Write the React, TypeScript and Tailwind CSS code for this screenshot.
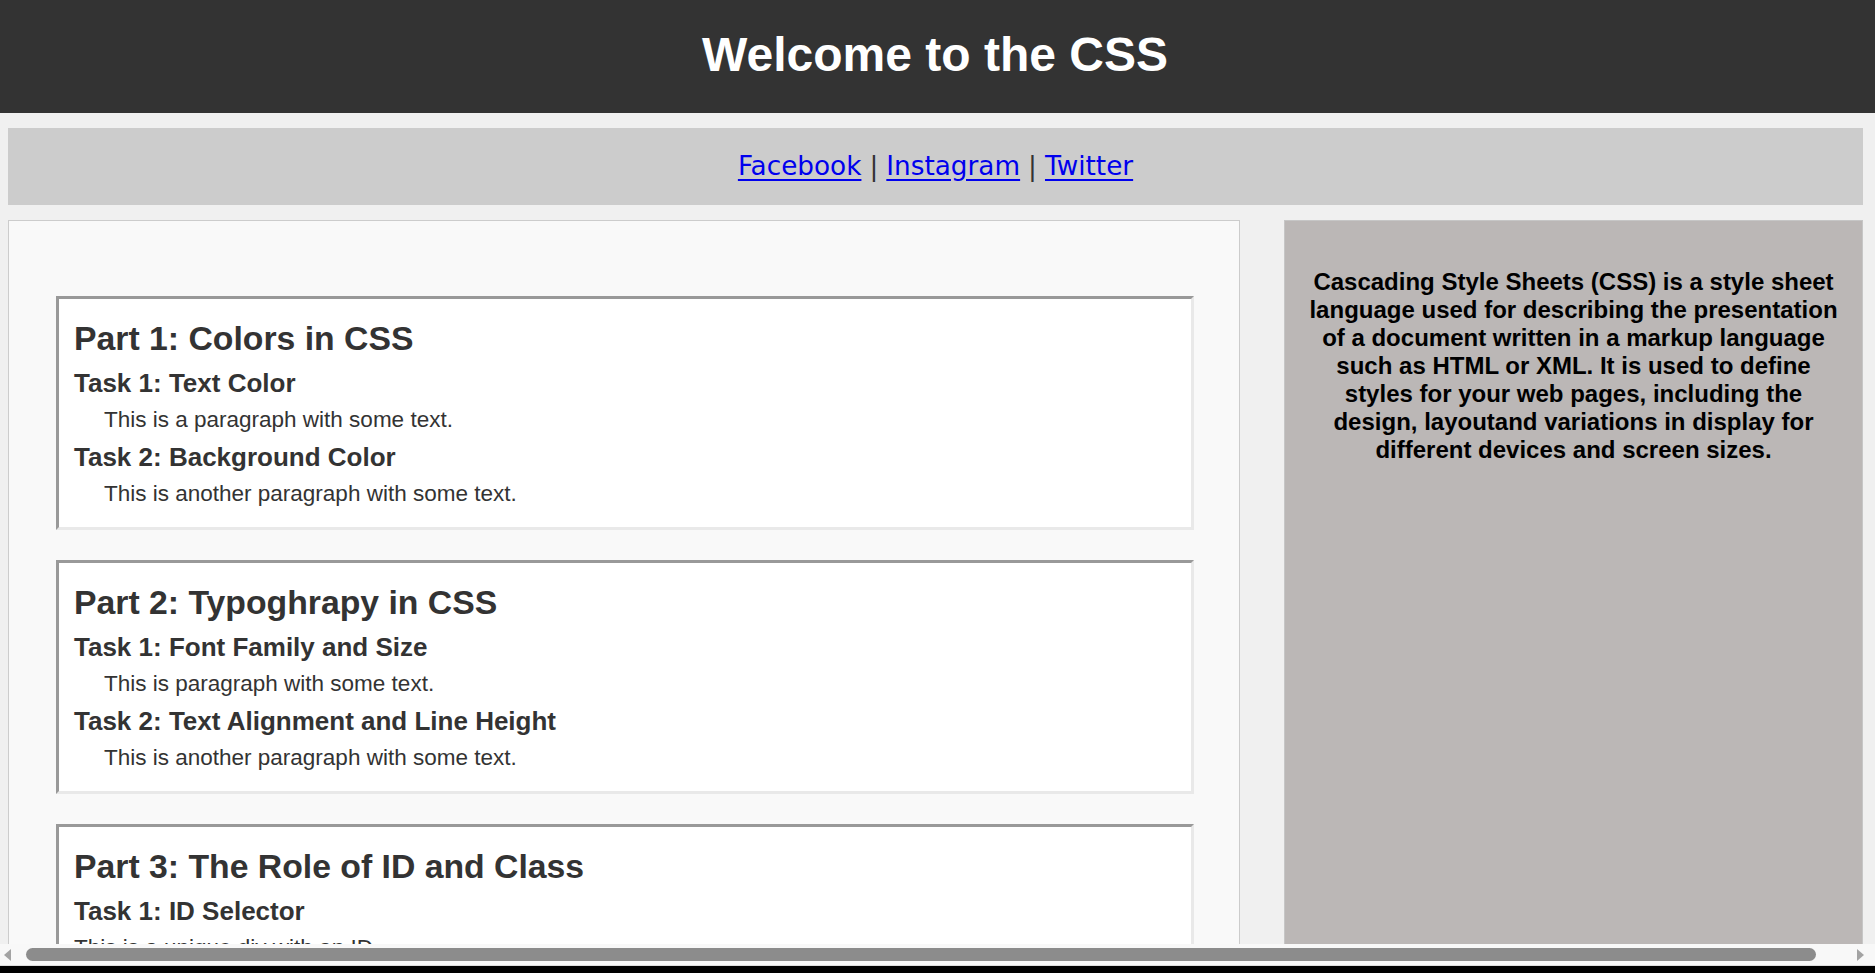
import React from "react";

const sans = { fontFamily: '"Liberation Sans", Arial, sans-serif' };

function Card({
  title,
  items,
}: {
  title: string;
  items: { kind: "h3" | "p" | "div"; text: string }[];
}) {
  return (
    <div className="w-[1138px] bg-white border-[3px] border-t-[#999999] border-l-[#999999] border-r-[#e9e9e9] border-b-[#e9e9e9] px-[15px] pt-[19px] pb-[20px] text-[#333333]">
      <h2 className="text-[33.75px] leading-[40px] font-bold">{title}</h2>
      {items.map((it, i) =>
        it.kind === "h3" ? (
          <h3
            key={i}
            className={`text-[26px] leading-[30px] font-bold ${i === 0 ? "mt-[10px]" : "mt-[9px]"}`}
          >
            {it.text}
          </h3>
        ) : it.kind === "p" ? (
          <p key={i} className="text-[22.5px] leading-[26px] mt-[9px] ml-[30px]">
            {it.text}
          </p>
        ) : (
          <div key={i} className="text-[22.5px] leading-[26px] mt-[9px]">
            {it.text}
          </div>
        )
      )}
    </div>
  );
}

export default function App() {
  return (
    <div className="h-[973px] w-[1875px] overflow-hidden flex flex-col bg-[#f0f0f0]" style={sans}>
      <div className="flex-1 overflow-hidden flex flex-col min-h-0">
        <header className="h-[113px] shrink-0 bg-[#333333] pt-[27px] text-center">
          <h1 className="text-[48px] leading-[56px] font-bold text-white pr-[5px]">Welcome to the CSS</h1>
        </header>

        <nav
          className="ml-[8px] mt-[15px] w-[1855px] h-[77px] shrink-0 bg-[#cccccc] flex items-center justify-center text-[26.3px] text-[#333333]"
          style={{ fontFamily: '"DejaVu Sans", sans-serif' }}
        >
          <a href="#" className="text-[#0000ee] underline underline-offset-[4px]">Facebook</a>
          <span className="mx-[8px]">|</span>
          <a href="#" className="text-[#0000ee] underline underline-offset-[4px]">Instagram</a>
          <span className="mx-[8px]">|</span>
          <a href="#" className="text-[#0000ee] underline underline-offset-[4px]">Twitter</a>
        </nav>

        <div className="ml-[8px] mt-[15px] flex gap-[44px] shrink-0">
          <main className="w-[1232px] border border-[#cccccc] bg-[#f9f9f9] pt-[75px] pl-[47px] pb-[40px] flex flex-col gap-[30px]">
            <Card
              title="Part 1: Colors in CSS"
              items={[
                { kind: "h3", text: "Task 1: Text Color" },
                { kind: "p", text: "This is a paragraph with some text." },
                { kind: "h3", text: "Task 2: Background Color" },
                { kind: "p", text: "This is another paragraph with some text." },
              ]}
            />
            <Card
              title="Part 2: Typoghrapy in CSS"
              items={[
                { kind: "h3", text: "Task 1: Font Family and Size" },
                { kind: "p", text: "This is paragraph with some text." },
                { kind: "h3", text: "Task 2: Text Alignment and Line Height" },
                { kind: "p", text: "This is another paragraph with some text." },
              ]}
            />
            <Card
              title="Part 3: The Role of ID and Class"
              items={[
                { kind: "h3", text: "Task 1: ID Selector" },
                { kind: "div", text: "This is a unique div with an ID." },
              ]}
            />
          </main>

          <aside className="w-[579px] border border-[#c6c6c6] bg-[#bbb7b6] pt-[47px] px-[20px]">
            <p className="text-[24px] leading-[28px] font-bold text-center text-black">
              Cascading Style Sheets (CSS) is a style sheet language used for describing the
              presentation of a document written in a markup language such as HTML or XML. It is
              used to define styles for your web pages, including the design, layoutand variations
              in display for different devices and screen sizes.
            </p>
          </aside>
        </div>
      </div>

      <div className="h-[22px] shrink-0 bg-[#f8f8f8] border-b border-[#dddddd] flex items-center">
        <div className="w-[26px] flex items-center pl-[4px]">
          <svg width="7" height="12" viewBox="0 0 7 12">
            <path d="M7 0 L0 6 L7 12 Z" fill="#a3a3a3" />
          </svg>
        </div>
        <div className="w-[1790px] h-[13px] rounded-full bg-[#8c8c8c]" />
        <div className="flex-1 flex items-center justify-end pr-[11px]">
          <svg width="7" height="12" viewBox="0 0 7 12">
            <path d="M0 0 L7 6 L0 12 Z" fill="#a3a3a3" />
          </svg>
        </div>
      </div>
      <div className="h-[7px] shrink-0 bg-black" />
    </div>
  );
}
